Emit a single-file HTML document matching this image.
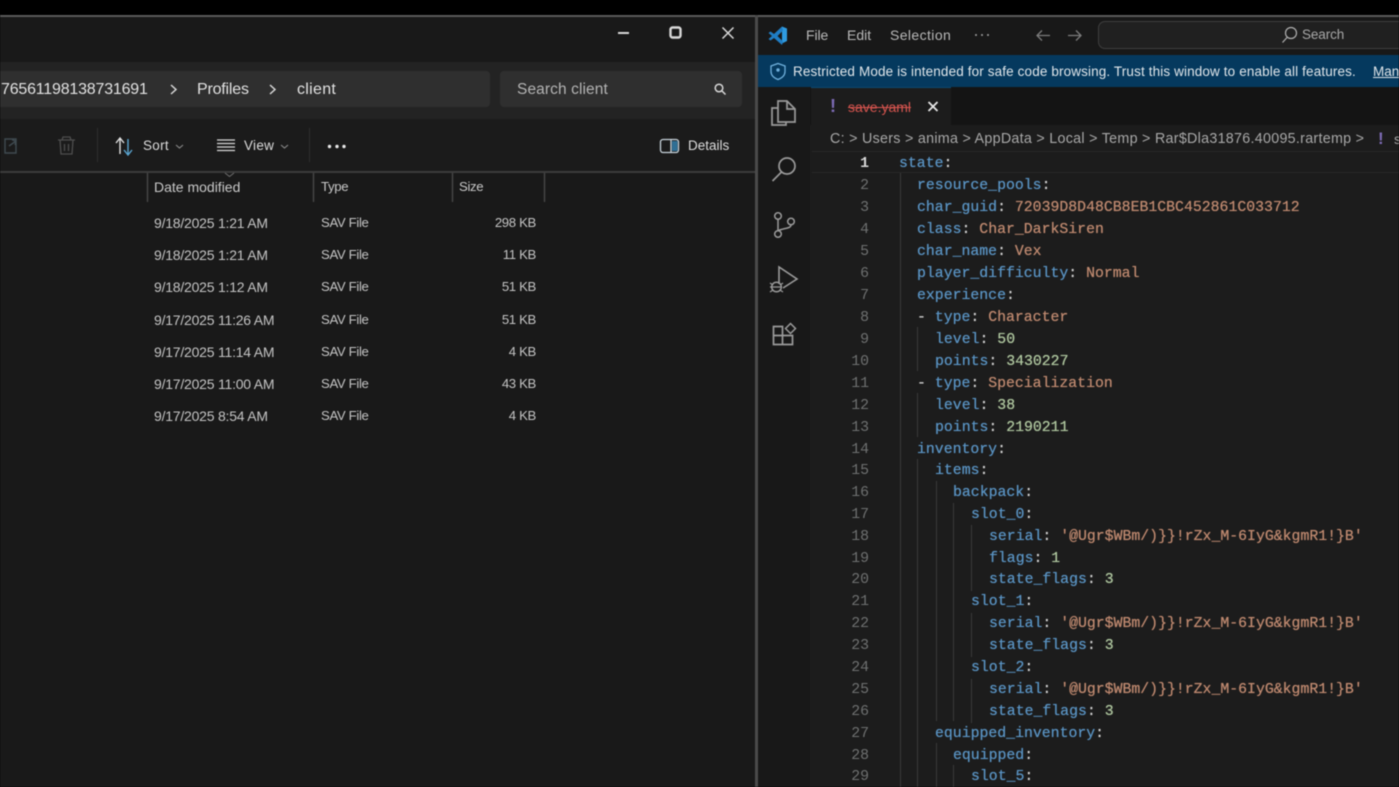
<!DOCTYPE html>
<html><head><meta charset="utf-8"><style>
html,body{margin:0;padding:0;background:#000}
#r{position:relative;width:1399px;height:787px;overflow:hidden;background:#000;font-family:"Liberation Sans",sans-serif;filter:blur(.5px)}
.a{position:absolute}
.t{position:absolute;white-space:pre;line-height:20px;transform-origin:0 50%}
.e{font-size:13.2px;color:#c4c4c4;letter-spacing:-.35px}
.d{font-size:14px;color:#c4c4c4;letter-spacing:-.22px}
.c{position:absolute;left:0;white-space:pre;font-family:"Liberation Mono",monospace;font-size:14.84px;line-height:22px;color:#d4d4d4;text-shadow:0 0 .6px currentColor}
.n{position:absolute;white-space:pre;font-family:"Liberation Mono",monospace;font-size:14.84px;line-height:22px;color:#6e7070;text-align:right;width:40px;left:829px}
.k{color:#5a94c4}.s{color:#c08a70}.m{color:#b0c8a0}.p{color:#c8c8c8}
.g{position:absolute;width:1px;background:#3a3a3a}
svg{position:absolute;overflow:visible}
</style></head><body><div id="r">
<!-- explorer -->
<div class="a" style="left:0;top:15px;width:1399px;height:2px;background:#5a5a5a"></div>
<div class="a" style="left:0;top:17px;width:755px;height:770px;background:#191919"></div>
<div class="a" style="left:0;top:62px;width:755px;height:57px;background:#232323"></div>
<div class="a" style="left:0;top:119px;width:755px;height:53px;background:#1b1b1b"></div>
<div class="a" style="left:0;top:171px;width:755px;height:2px;background:#3c3c3c"></div>
<div class="a" style="left:0;top:71px;width:490px;height:36px;background:#2f2f2f;border-radius:0 4px 4px 0"></div>
<div class="a" style="left:500px;top:71px;width:242px;height:36px;background:#2f2f2f;border-radius:4px"></div>
<div class="a" style="left:755px;top:15px;width:3px;height:772px;background:#4a4a4a"></div>
<svg style="left:0;top:0" width="755" height="180" fill="none" stroke="#d8d8d8" stroke-width="1.6">
<path d="M618 33h11" stroke-width="2"/>
<rect x="670.5" y="27.5" width="10" height="10" rx="2" stroke-width="2.4"/>
<path d="M722.5 27.5l11 11M733.5 27.5l-11 11" stroke-width="1.5"/>
<path d="M171 85l5 4.500-5 4.500M270 85l5 4.500-5 4.500" stroke-width="1.500"/>
<circle cx="719" cy="88" r="3.800" stroke-width="1.500"/><path d="M722 91l3.500 3.500" stroke-width="1.500"/>
<path d="M5 139h11v14H5zM9 146l7-5M12 140l4 1-1 4" stroke="#3f4a50" stroke-width="1.400"/>
<path d="M58 140h17M62 140l1-3h7l1 3M60 140l1 14h11l1-14M64.500 144v7M68.500 144v7" stroke="#4e4e4e" stroke-width="1.300"/>
<path d="M97.500 128v34M309.500 128v34" stroke="#2e2e2e" stroke-width="1"/>
<path d="M120 154v-15M116 143l4-5 4 5" stroke="#e0e0e0" stroke-width="1.400"/>
<path d="M128 139v15M124 150l4 5 4-5" stroke="#5aa5d0" stroke-width="1.400"/>
<path d="M176 145l3.500 3 3.500-3M281 145l3.500 3 3.500-3" stroke="#8a8a8a" stroke-width="1.100"/>
<path d="M217 140h18M217 143.500h18M217 147h18M217 150.500h18" stroke-width="1.200"/>
<circle cx="329.500" cy="146.500" r="1.700" fill="#e8e8e8" stroke="none"/><circle cx="337" cy="146.500" r="1.700" fill="#e8e8e8" stroke="none"/><circle cx="344" cy="146.500" r="1.700" fill="#e8e8e8" stroke="none"/>
<rect x="660.500" y="139.500" width="18" height="13" rx="2.500" stroke="#c8d4dc" stroke-width="1.300"/><path d="M671 140v12" stroke="#c8d4dc" stroke-width="1.300"/><rect x="672" y="141" width="5.500" height="10" fill="#2f6f95" stroke="none"/>
<path d="M225 173l4.500 3.500 4.500-3.500" stroke="#6e6e6e" stroke-width="1"/>
<path d="M147.500 173v29M313.500 173v29M452.500 173v29M544.500 173v29" stroke="#4a4a4a" stroke-width="1.300"/>
</svg>
<div class="t" style="left:1px;top:80px;font-size:16px;color:#e2e2e2;letter-spacing:-.2px">76561198138731691</div>
<div class="t" style="left:197px;top:80px;font-size:16px;color:#e2e2e2;letter-spacing:-.2px">Profiles</div>
<div class="t" style="left:297px;top:80px;font-size:16px;color:#e2e2e2;letter-spacing:.3px">client</div>
<div class="t" style="left:517px;top:80px;font-size:15.500px;color:#b4b4b4;letter-spacing:.1px">Search client</div>
<div class="t" style="left:143px;top:136px;font-size:13.500px;color:#dcdcdc;letter-spacing:.3px">Sort</div>
<div class="t" style="left:244px;top:136px;font-size:13.500px;color:#dcdcdc;letter-spacing:.3px">View</div>
<div class="t" style="left:688px;top:136px;font-size:13.500px;color:#dcdcdc;letter-spacing:0">Details</div>
<div class="t d" style="left:154px;top:177px;color:#c8c8c8;letter-spacing:0">Date modified</div>
<div class="t e" style="left:321px;top:177px;color:#c8c8c8">Type</div>
<div class="t e" style="left:459px;top:177px;color:#c8c8c8">Size</div>
<div class="t d" style="left:154px;top:213px">9/18/2025 1:21 AM</div><div class="t e" style="left:321px;top:213px">SAV File</div><div class="t e" style="right:863px;top:213px">298 KB</div>
<div class="t d" style="left:154px;top:245px">9/18/2025 1:21 AM</div><div class="t e" style="left:321px;top:245px">SAV File</div><div class="t e" style="right:863px;top:245px">11 KB</div>
<div class="t d" style="left:154px;top:277px">9/18/2025 1:12 AM</div><div class="t e" style="left:321px;top:277px">SAV File</div><div class="t e" style="right:863px;top:277px">51 KB</div>
<div class="t d" style="left:154px;top:310px">9/17/2025 11:26 AM</div><div class="t e" style="left:321px;top:310px">SAV File</div><div class="t e" style="right:863px;top:310px">51 KB</div>
<div class="t d" style="left:154px;top:342px">9/17/2025 11:14 AM</div><div class="t e" style="left:321px;top:342px">SAV File</div><div class="t e" style="right:863px;top:342px">4 KB</div>
<div class="t d" style="left:154px;top:374px">9/17/2025 11:00 AM</div><div class="t e" style="left:321px;top:374px">SAV File</div><div class="t e" style="right:863px;top:374px">43 KB</div>
<div class="t d" style="left:154px;top:406px">9/17/2025 8:54 AM</div><div class="t e" style="left:321px;top:406px">SAV File</div><div class="t e" style="right:863px;top:406px">4 KB</div>

<!-- vscode -->
<div class="a" style="left:758px;top:17px;width:641px;height:770px;background:#1c1c1c"></div>
<div class="a" style="left:758px;top:17px;width:641px;height:38px;background:#181818"></div>
<div class="a" style="left:758px;top:55px;width:641px;height:32px;background:#05395e"></div>
<div class="a" style="left:758px;top:87px;width:52px;height:700px;background:#181818"></div>
<div class="a" style="left:810px;top:87px;width:589px;height:38px;background:#141414"></div>
<div class="a" style="left:811px;top:87px;width:140px;height:38px;background:#1c1c1c;border-top:1px solid #0d4a70;box-sizing:border-box"></div>
<div class="a" style="left:1098px;top:21px;width:320px;height:28px;background:#202020;border:1px solid #3e3e3e;border-radius:7px;box-sizing:border-box"></div>
<svg style="left:0;top:0" width="1399" height="360" fill="none" stroke="#a8a8a8" stroke-width="1.400">
<path d="M782 26.500v17l5-2.500v-12.500z" fill="#2f9be0" stroke="none"/>
<path d="M782 26.500l-8 7.500-3.500-2.500-2 1.500 3.500 3-3.500 3 2 1.500 3.500-2.500 8 7 1-3.500-5.500-5.500 5.500-5.500z" fill="#1f7dc4" stroke="none"/>
<path d="M1050 35.500h-13M1042 30.500l-5 5 5 5M1068 35.500h13M1076 30.500l5 5-5 5" stroke="#7c7c7c" stroke-width="1.300"/>
<circle cx="976" cy="35" r="1" fill="#a0a0a0" stroke="none"/><circle cx="982" cy="35" r="1" fill="#a0a0a0" stroke="none"/><circle cx="988" cy="35" r="1" fill="#a0a0a0" stroke="none"/>
<circle cx="1291" cy="33" r="5.500" stroke="#b0b0b0" stroke-width="1.200"/><path d="M1287 37.500l-4.500 5" stroke="#b0b0b0" stroke-width="1.200"/>
<path d="M778 63.500l7 2.500v5.500c0 4-3 6.500-7 8-4-1.500-7-4-7-8V66z" stroke="#6fb0dc" stroke-width="1.300"/><circle cx="778" cy="70" r="1.700" fill="#6fb0dc" stroke="none"/>
<!-- explorer icon -->
<path d="M778 101h9l8 8v13h-17zM787 101v8h8M778 108h-6v17h14v-3" stroke="#9a9a9a" stroke-width="1.700"/>
<!-- search -->
<circle cx="787" cy="166" r="8" stroke="#9a9a9a" stroke-width="1.700"/><path d="M781.500 172l-9 9" stroke="#9a9a9a" stroke-width="1.700"/>
<!-- scm -->
<circle cx="778" cy="216" r="3.300" stroke="#9a9a9a" stroke-width="1.500"/><circle cx="791" cy="221.500" r="3.300" stroke="#9a9a9a" stroke-width="1.500"/><circle cx="778" cy="234" r="3.300" stroke="#9a9a9a" stroke-width="1.500"/><path d="M778 219.500v11M791 225c0 4-9 3-13 6" stroke="#9a9a9a" stroke-width="1.500"/>
<!-- debug -->
<path d="M779 284v-17l18 12-14 9" stroke="#9a9a9a" stroke-width="1.600"/><circle cx="776.500" cy="287" r="4.800" stroke="#9a9a9a" stroke-width="1.500"/><path d="M770 283l3 2M770 287h2M770 292l3-2M783 283l-3 2M783 292l-3-2M771 287h11" stroke="#9a9a9a" stroke-width="1.200"/>
<!-- extensions -->
<path d="M773.500 326.500h9v18h-9zM773.500 335.500h19v9h-10M792.500 335.500v9" stroke="#9a9a9a" stroke-width="1.700"/><path d="M790.500 323.500l5 5-5 5-5-5z" stroke="#9a9a9a" stroke-width="1.500"/>
<!-- close x -->
<path d="M928.500 102l9 9M937.500 102l-9 9" stroke="#e6e6e6" stroke-width="1.800"/>
</svg>
<div class="t" style="left:806px;top:25px;font-size:14px;color:#b8b8b8;letter-spacing:-.1px">File</div>
<div class="t" style="left:847px;top:25px;font-size:14px;color:#b8b8b8;letter-spacing:0">Edit</div>
<div class="t" style="left:890px;top:25px;font-size:14px;color:#b8b8b8;letter-spacing:.4px">Selection</div>
<div class="t" style="left:1302px;top:25px;font-size:13.500px;color:#a8a8a8;letter-spacing:-.1px">Search</div>
<div class="t" style="left:793px;top:62px;font-size:13.500px;color:#e0e6ea;letter-spacing:.13px">Restricted Mode is intended for safe code browsing. Trust this window to enable all features.</div>
<div class="t" style="left:1373px;top:62px;font-size:13.500px;color:#e0e6ea;text-decoration:underline">Manage</div>
<div class="t" style="left:830px;top:96px;font-size:18px;font-weight:bold;color:#7d6bb5">!</div>
<div class="t" style="left:848px;top:97px;font-size:14px;color:#d8554f;text-decoration:line-through;letter-spacing:0">save.yaml</div>
<div class="t" style="left:830px;top:129px;font-size:14.300px;color:#a8a8a8;letter-spacing:.28px">C: &gt; Users &gt; anima &gt; AppData &gt; Local &gt; Temp &gt; Rar$Dla31876.40095.rartemp &gt;</div>
<div class="t" style="left:1378px;top:129px;font-size:17px;font-weight:bold;color:#7d6bb5">!</div>
<div class="t" style="left:1394px;top:129px;font-size:14px;color:#a8a8a8">save</div>
<div class="a" style="left:812px;top:151px;width:587px;height:1px;background:#282828"></div>
<div class="a" style="left:812px;top:172px;width:587px;height:1px;background:#282828"></div>
<div class="g" style="left:900px;top:173px;height:614px"></div>
<div class="g" style="left:917px;top:327px;height:44px"></div>
<div class="g" style="left:917px;top:393px;height:44px"></div>
<div class="g" style="left:917px;top:459px;height:328px"></div>
<div class="g" style="left:936px;top:481px;height:240px"></div>
<div class="g" style="left:936px;top:743px;height:44px"></div>
<div class="g" style="left:953px;top:503px;height:218px"></div>
<div class="g" style="left:953px;top:765px;height:22px"></div>
<div class="g" style="left:971px;top:525px;height:66px"></div>
<div class="g" style="left:971px;top:613px;height:44px"></div>
<div class="g" style="left:971px;top:679px;height:44px"></div>

<div class="n" style="top:153px;color:#d8d8d8;font-weight:bold">1</div>
<div class="n" style="top:175px">2</div>
<div class="n" style="top:197px">3</div>
<div class="n" style="top:219px">4</div>
<div class="n" style="top:241px">5</div>
<div class="n" style="top:263px">6</div>
<div class="n" style="top:285px">7</div>
<div class="n" style="top:307px">8</div>
<div class="n" style="top:329px">9</div>
<div class="n" style="top:351px">10</div>
<div class="n" style="top:373px">11</div>
<div class="n" style="top:395px">12</div>
<div class="n" style="top:417px">13</div>
<div class="n" style="top:439px">14</div>
<div class="n" style="top:460px">15</div>
<div class="n" style="top:482px">16</div>
<div class="n" style="top:504px">17</div>
<div class="n" style="top:526px">18</div>
<div class="n" style="top:548px">19</div>
<div class="n" style="top:569px">20</div>
<div class="n" style="top:591px">21</div>
<div class="n" style="top:613px">22</div>
<div class="n" style="top:635px">23</div>
<div class="n" style="top:657px">24</div>
<div class="n" style="top:679px">25</div>
<div class="n" style="top:701px">26</div>
<div class="n" style="top:723px">27</div>
<div class="n" style="top:745px">28</div>
<div class="n" style="top:766px">29</div>

<div class="c" style="left:899px;top:153px"><span class="k">state</span>:</div>
<div class="c" style="left:917px;top:175px"><span class="k">resource_pools</span>:</div>
<div class="c" style="left:917px;top:197px"><span class="k">char_guid</span>: <span class="s">72039D8D48CB8EB1CBC452861C033712</span></div>
<div class="c" style="left:917px;top:219px"><span class="k">class</span>: <span class="s">Char_DarkSiren</span></div>
<div class="c" style="left:917px;top:241px"><span class="k">char_name</span>: <span class="s">Vex</span></div>
<div class="c" style="left:917px;top:263px"><span class="k">player_difficulty</span>: <span class="s">Normal</span></div>
<div class="c" style="left:917px;top:285px"><span class="k">experience</span>:</div>
<div class="c" style="left:917px;top:307px">- <span class="k">type</span>: <span class="s">Character</span></div>
<div class="c" style="left:935px;top:329px"><span class="k">level</span>: <span class="m">50</span></div>
<div class="c" style="left:935px;top:351px"><span class="k">points</span>: <span class="m">3430227</span></div>
<div class="c" style="left:917px;top:373px">- <span class="k">type</span>: <span class="s">Specialization</span></div>
<div class="c" style="left:935px;top:395px"><span class="k">level</span>: <span class="m">38</span></div>
<div class="c" style="left:935px;top:417px"><span class="k">points</span>: <span class="m">2190211</span></div>
<div class="c" style="left:917px;top:439px"><span class="k">inventory</span>:</div>
<div class="c" style="left:935px;top:460px"><span class="k">items</span>:</div>
<div class="c" style="left:953px;top:482px"><span class="k">backpack</span>:</div>
<div class="c" style="left:971px;top:504px"><span class="k">slot_0</span>:</div>
<div class="c" style="left:989px;top:526px"><span class="k">serial</span>: <span class="s">'@Ugr$WBm/)}}!rZx_M-6IyG&amp;kgmR1!}B'</span></div>
<div class="c" style="left:989px;top:548px"><span class="k">flags</span>: <span class="m">1</span></div>
<div class="c" style="left:989px;top:569px"><span class="k">state_flags</span>: <span class="m">3</span></div>
<div class="c" style="left:971px;top:591px"><span class="k">slot_1</span>:</div>
<div class="c" style="left:989px;top:613px"><span class="k">serial</span>: <span class="s">'@Ugr$WBm/)}}!rZx_M-6IyG&amp;kgmR1!}B'</span></div>
<div class="c" style="left:989px;top:635px"><span class="k">state_flags</span>: <span class="m">3</span></div>
<div class="c" style="left:971px;top:657px"><span class="k">slot_2</span>:</div>
<div class="c" style="left:989px;top:679px"><span class="k">serial</span>: <span class="s">'@Ugr$WBm/)}}!rZx_M-6IyG&amp;kgmR1!}B'</span></div>
<div class="c" style="left:989px;top:701px"><span class="k">state_flags</span>: <span class="m">3</span></div>
<div class="c" style="left:935px;top:723px"><span class="k">equipped_inventory</span>:</div>
<div class="c" style="left:953px;top:745px"><span class="k">equipped</span>:</div>
<div class="c" style="left:971px;top:766px"><span class="k">slot_5</span>:</div>
</div></body></html>
